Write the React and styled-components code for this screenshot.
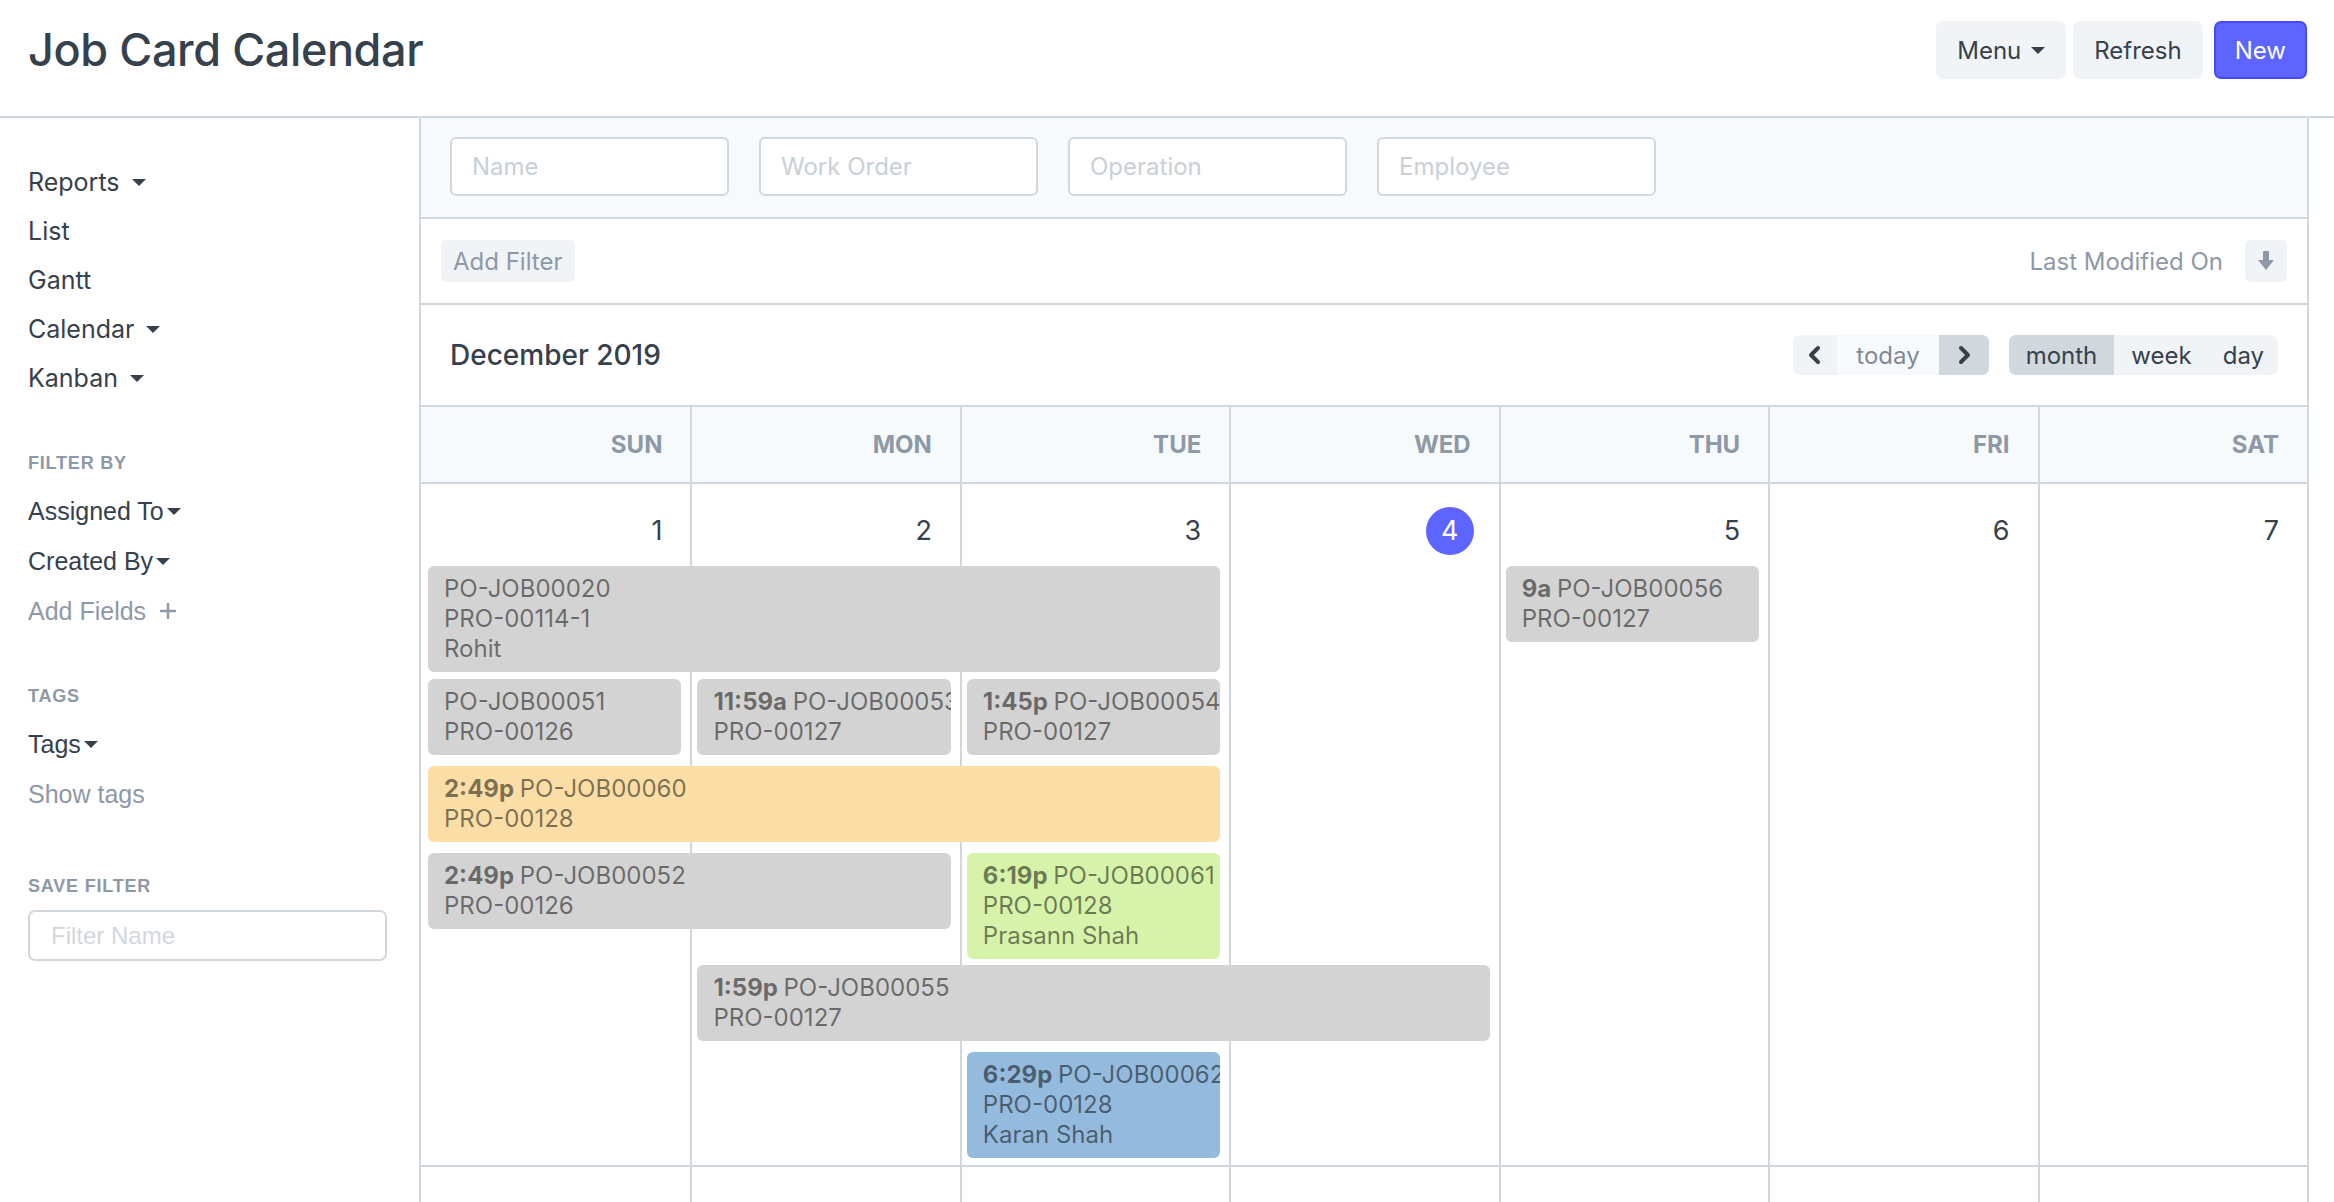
import React from 'react';
import styled, { createGlobalStyle, css } from 'styled-components';

const GlobalStyle = createGlobalStyle`
  html, body {
    margin: 0;
    padding: 0;
    background: #ffffff;
  }
  body {
    font-family: Inter, "Noto Sans", sans-serif;
    color: #36414c;
  }
  * { box-sizing: border-box; }
`;

const Page = styled.div`
  height: 100vh;
  overflow: hidden;
  display: flex;
  flex-direction: column;
`;

const PageHead = styled.header`
  height: 118px;
  flex-shrink: 0;
  border-bottom: 2px solid #d1d8dd;
  display: flex;
  align-items: flex-start;
  justify-content: space-between;
  padding: 21px 27px 0 28px;
`;

const Title = styled.h1`
  margin: 0;
  font-size: 45px;
  line-height: 58px;
  font-weight: 500;
  letter-spacing: -0.4px;
  color: #36414c;
`;

const Actions = styled.div`
  display: flex;
  gap: 7px;
`;

const Button = styled.button`
  height: 58px;
  padding: 0 19px;
  border: 2px solid transparent;
  border-radius: 7px;
  background: #f0f4f7;
  color: #36414c;
  font-family: Inter, sans-serif;
  font-size: 24px;
  display: flex;
  align-items: center;
  gap: 10px;
  ${p => p.$primary && css`
    margin-left: 4px;
    background: #5e64ff;
    border-color: #444bff;
    color: #ffffff;
  `}
`;

const Caret = styled.span`
  display: inline-block;
  width: 0;
  height: 0;
  border-left: ${p => p.$size || 7}px solid transparent;
  border-right: ${p => p.$size || 7}px solid transparent;
  border-top: ${p => p.$size || 7}px solid #36414c;
  margin-left: ${p => p.$gap ?? 12}px;
  vertical-align: middle;
`;

const Body = styled.div`
  flex: 1;
  display: flex;
  min-height: 0;
`;

const Sidebar = styled.aside`
  width: 419px;
  flex-shrink: 0;
  padding: 40px 0 0 28px;
  display: flex;
  flex-direction: column;
`;

const NavItem = styled.div`
  height: 49px;
  line-height: 49px;
  font-size: 25px;
  color: #36414c;
  display: flex;
  align-items: center;
`;

const SideLabel = styled.div`
  margin-top: ${p => p.$top}px;
  margin-bottom: ${p => p.$bottom}px;
  height: 30px;
  line-height: 30px;
  font-family: "Liberation Sans", Arial, sans-serif;
  font-size: 18px;
  font-weight: 700;
  letter-spacing: 0.8px;
  color: #8d99a6;
`;

const FilterItem = styled.div`
  height: 50px;
  display: flex;
  align-items: center;
  font-family: "Liberation Sans", Arial, sans-serif;
  font-size: 25px;
  color: ${p => (p.$muted ? '#8d99a6' : '#36414c')};
`;

const SideInput = styled.input`
  width: 359px;
  height: 51px;
  border: 2px solid #d1d8dd;
  border-radius: 7px;
  padding: 0 21px;
  font-family: "Liberation Sans", Arial, sans-serif;
  font-size: 24px;
  color: #36414c;
  &::placeholder { color: #d1d8dd; }
`;

const Main = styled.main`
  flex: 1;
  margin-right: 25px;
  border-left: 2px solid #d1d8dd;
  border-right: 2px solid #d1d8dd;
  display: flex;
  flex-direction: column;
`;

const StandardFilters = styled.div`
  height: 101px;
  flex-shrink: 0;
  background: #f7fafc;
  border-bottom: 2px solid #d1d8dd;
  padding: 19px 29px 0;
  display: flex;
  gap: 30px;
`;

const FilterInput = styled.input`
  width: 279px;
  height: 59px;
  border: 2px solid #d1d8dd;
  border-radius: 6px;
  background: #ffffff;
  padding: 0 20px;
  font-family: Inter, sans-serif;
  font-size: 24px;
  color: #36414c;
  &::placeholder { color: #c8d0d6; }
`;

const SortBar = styled.div`
  height: 86px;
  flex-shrink: 0;
  border-bottom: 2px solid #d1d8dd;
  padding: 0 20px;
  display: flex;
  align-items: center;
  justify-content: space-between;
`;

const SmallButton = styled.div`
  height: 42px;
  min-width: 42px;
  padding: 0 ${p => (p.$icon ? 0 : 12)}px;
  border-radius: 5px;
  background: #f0f4f7;
  color: #8d99a6;
  font-size: 24px;
  display: flex;
  align-items: center;
  justify-content: center;
`;

const SortGroup = styled.div`
  display: flex;
  align-items: center;
  gap: 22px;
  font-size: 24px;
  color: #8d99a6;
`;

const CalToolbar = styled.div`
  height: 100px;
  flex-shrink: 0;
  padding: 0 29px;
  display: flex;
  align-items: center;
  justify-content: space-between;
`;

const MonthTitle = styled.h2`
  margin: 0;
  font-size: 28px;
  font-weight: 500;
  color: #36414c;
`;

const ToolGroups = styled.div`
  display: flex;
  gap: 20px;
`;

const ButtonGroup = styled.div`
  display: flex;
  height: 40px;
  border-radius: 7px;
  overflow: hidden;
  background: #f0f4f7;
`;

const GroupButton = styled.div`
  height: 40px;
  padding: 0 ${p => p.$pad ?? 17}px;
  display: flex;
  align-items: center;
  justify-content: center;
  font-size: 24px;
  color: ${p => (p.$dim ? '#7f8a96' : '#36414c')};
  background: ${p => p.$bg || 'transparent'};
`;

const Calendar = styled.div`
  flex: 1;
  min-height: 0;
`;

const DayHeadRow = styled.div`
  display: grid;
  grid-template-columns: repeat(7, 1fr);
  height: 79px;
  border-top: 2px solid #d1d8dd;
  border-bottom: 2px solid #d1d8dd;
  background: #f7fafc;
`;

const DayHead = styled.div`
  display: flex;
  align-items: center;
  justify-content: flex-end;
  padding-right: 28px;
  font-size: 24px;
  font-weight: 700;
  color: #8d99a6;
  & + & { border-left: 2px solid #d1d8dd; }
`;

const Week = styled.div`
  display: grid;
  grid-template-columns: repeat(7, 1fr);
  grid-template-rows: 82px repeat(6, auto) 1fr;
  height: 683px;
  border-bottom: 2px solid #d1d8dd;
`;

const DayBg = styled.div`
  grid-row: 1 / -1;
  grid-column: ${p => p.$col};
  border-left: ${p => (p.$col > 1 ? '2px solid #d1d8dd' : 'none')};
`;

const DayNum = styled.div`
  grid-row: 1;
  grid-column: ${p => p.$col};
  justify-self: end;
  align-self: start;
  margin: 23px 28px 0 0;
  height: 48px;
  line-height: 48px;
  font-size: 27px;
  color: #36414c;
  ${p => p.$today && css`
    width: 48px;
    margin-right: 25px;
    border-radius: 50%;
    background: #5e64ff;
    color: #ffffff;
    text-align: center;
  `}
`;

const Event = styled.div`
  grid-row: ${p => p.$row};
  grid-column: ${p => p.$col} / span ${p => p.$span};
  align-self: start;
  margin: 0 9px 11px 7px;
  padding: 8px 16px;
  border-radius: 6px;
  background: ${p => p.$bg};
  color: rgba(0, 0, 0, 0.5);
  font-size: 24px;
  line-height: 30px;
  white-space: nowrap;
  overflow: hidden;
  b { font-weight: 700; }
`;

const colors = {
  gray: '#d3d3d3',
  yellow: '#fadea6',
  green: '#d7f3aa',
  blue: '#94bbdd',
};

const days = ['SUN', 'MON', 'TUE', 'WED', 'THU', 'FRI', 'SAT'];

const events = [
  { row: 2, col: 1, span: 3, color: 'gray', lines: ['PO-JOB00020', 'PRO-00114-1', 'Rohit'] },
  { row: 2, col: 5, span: 1, color: 'gray', time: '9a', lines: ['PO-JOB00056', 'PRO-00127'] },
  { row: 3, col: 1, span: 1, color: 'gray', lines: ['PO-JOB00051', 'PRO-00126'] },
  { row: 3, col: 2, span: 1, color: 'gray', time: '11:59a', lines: ['PO-JOB00053', 'PRO-00127'] },
  { row: 3, col: 3, span: 1, color: 'gray', time: '1:45p', lines: ['PO-JOB00054', 'PRO-00127'] },
  { row: 4, col: 1, span: 3, color: 'yellow', time: '2:49p', lines: ['PO-JOB00060', 'PRO-00128'] },
  { row: 5, col: 1, span: 2, color: 'gray', time: '2:49p', lines: ['PO-JOB00052', 'PRO-00126'] },
  { row: 5, col: 3, span: 1, color: 'green', time: '6:19p', lines: ['PO-JOB00061', 'PRO-00128', 'Prasann Shah'] },
  { row: 6, col: 2, span: 3, color: 'gray', time: '1:59p', lines: ['PO-JOB00055', 'PRO-00127'] },
  { row: 7, col: 3, span: 1, color: 'blue', time: '6:29p', lines: ['PO-JOB00062', 'PRO-00128', 'Karan Shah'] },
];

function Chevron({ dir }) {
  const d = dir === 'left' ? 'M13 4 L6 11 L13 18' : 'M7 4 L14 11 L7 18';
  return (
    <svg width="20" height="22" viewBox="0 0 20 22">
      <path d={d} fill="none" stroke="#36414c" strokeWidth="4" strokeLinecap="round" strokeLinejoin="round" />
    </svg>
  );
}

function SortArrow() {
  return (
    <svg width="18" height="22" viewBox="0 0 18 22">
      <rect x="6" y="1" width="6" height="11" rx="1" fill="#8d99a6" />
      <path d="M1 10 L17 10 L9 20 Z" fill="#8d99a6" strokeLinejoin="round" />
    </svg>
  );
}

function Plus() {
  return (
    <svg width="20" height="20" viewBox="0 0 20 20" style={{ marginLeft: 12 }}>
      <path d="M10 2 V18 M2 10 H18" stroke="#8d99a6" strokeWidth="2.4" />
    </svg>
  );
}

function WeekRow({ first }) {
  return (
    <Week>
      {days.map((d, i) => (
        <DayBg key={d} $col={i + 1} />
      ))}
      {first && [1, 2, 3, 4, 5, 6, 7].map(n => (
        <DayNum key={n} $col={n} $today={n === 4}>{n}</DayNum>
      ))}
      {first && events.map((e, i) => (
        <Event key={i} $row={e.row} $col={e.col} $span={e.span} $bg={colors[e.color]}>
          <div>
            {e.time && <b>{e.time} </b>}
            {e.lines[0]}
          </div>
          {e.lines.slice(1).map(l => (
            <div key={l}>{l}</div>
          ))}
        </Event>
      ))}
    </Week>
  );
}

export default function App() {
  return (
    <Page>
      <GlobalStyle />
      <PageHead>
        <Title>Job Card Calendar</Title>
        <Actions>
          <Button>Menu<Caret $gap={0} /></Button>
          <Button>Refresh</Button>
          <Button $primary>New</Button>
        </Actions>
      </PageHead>
      <Body>
        <Sidebar>
          <NavItem>Reports<Caret /></NavItem>
          <NavItem>List</NavItem>
          <NavItem>Gantt</NavItem>
          <NavItem>Calendar<Caret /></NavItem>
          <NavItem>Kanban<Caret /></NavItem>

          <SideLabel $top={45} $bottom={8}>FILTER BY</SideLabel>
          <FilterItem>Assigned To<Caret $gap={3} /></FilterItem>
          <FilterItem>Created By<Caret $gap={3} /></FilterItem>
          <FilterItem $muted>Add Fields<Plus /></FilterItem>

          <SideLabel $top={45} $bottom={8}>TAGS</SideLabel>
          <FilterItem>Tags<Caret $gap={3} /></FilterItem>
          <FilterItem $muted>Show tags</FilterItem>

          <SideLabel $top={52} $bottom={9}>SAVE FILTER</SideLabel>
          <SideInput placeholder="Filter Name" />
        </Sidebar>

        <Main>
          <StandardFilters>
            <FilterInput placeholder="Name" />
            <FilterInput placeholder="Work Order" />
            <FilterInput placeholder="Operation" />
            <FilterInput placeholder="Employee" />
          </StandardFilters>

          <SortBar>
            <SmallButton>Add Filter</SmallButton>
            <SortGroup>
              <span>Last Modified On</span>
              <SmallButton $icon><SortArrow /></SmallButton>
            </SortGroup>
          </SortBar>

          <CalToolbar>
            <MonthTitle>December 2019</MonthTitle>
            <ToolGroups>
              <ButtonGroup>
                <GroupButton $pad={12}><Chevron dir="left" /></GroupButton>
                <GroupButton $dim $bg="#f7fafc" $pad={19}>today</GroupButton>
                <GroupButton $bg="#d1d8dd" $pad={15}><Chevron dir="right" /></GroupButton>
              </ButtonGroup>
              <ButtonGroup>
                <GroupButton $bg="#d1d8dd">month</GroupButton>
                <GroupButton>week</GroupButton>
                <GroupButton $pad={14}>day</GroupButton>
              </ButtonGroup>
            </ToolGroups>
          </CalToolbar>

          <Calendar>
            <DayHeadRow>
              {days.map(d => (
                <DayHead key={d}>{d}</DayHead>
              ))}
            </DayHeadRow>
            <WeekRow first />
            <WeekRow />
          </Calendar>
        </Main>
      </Body>
    </Page>
  );
}
